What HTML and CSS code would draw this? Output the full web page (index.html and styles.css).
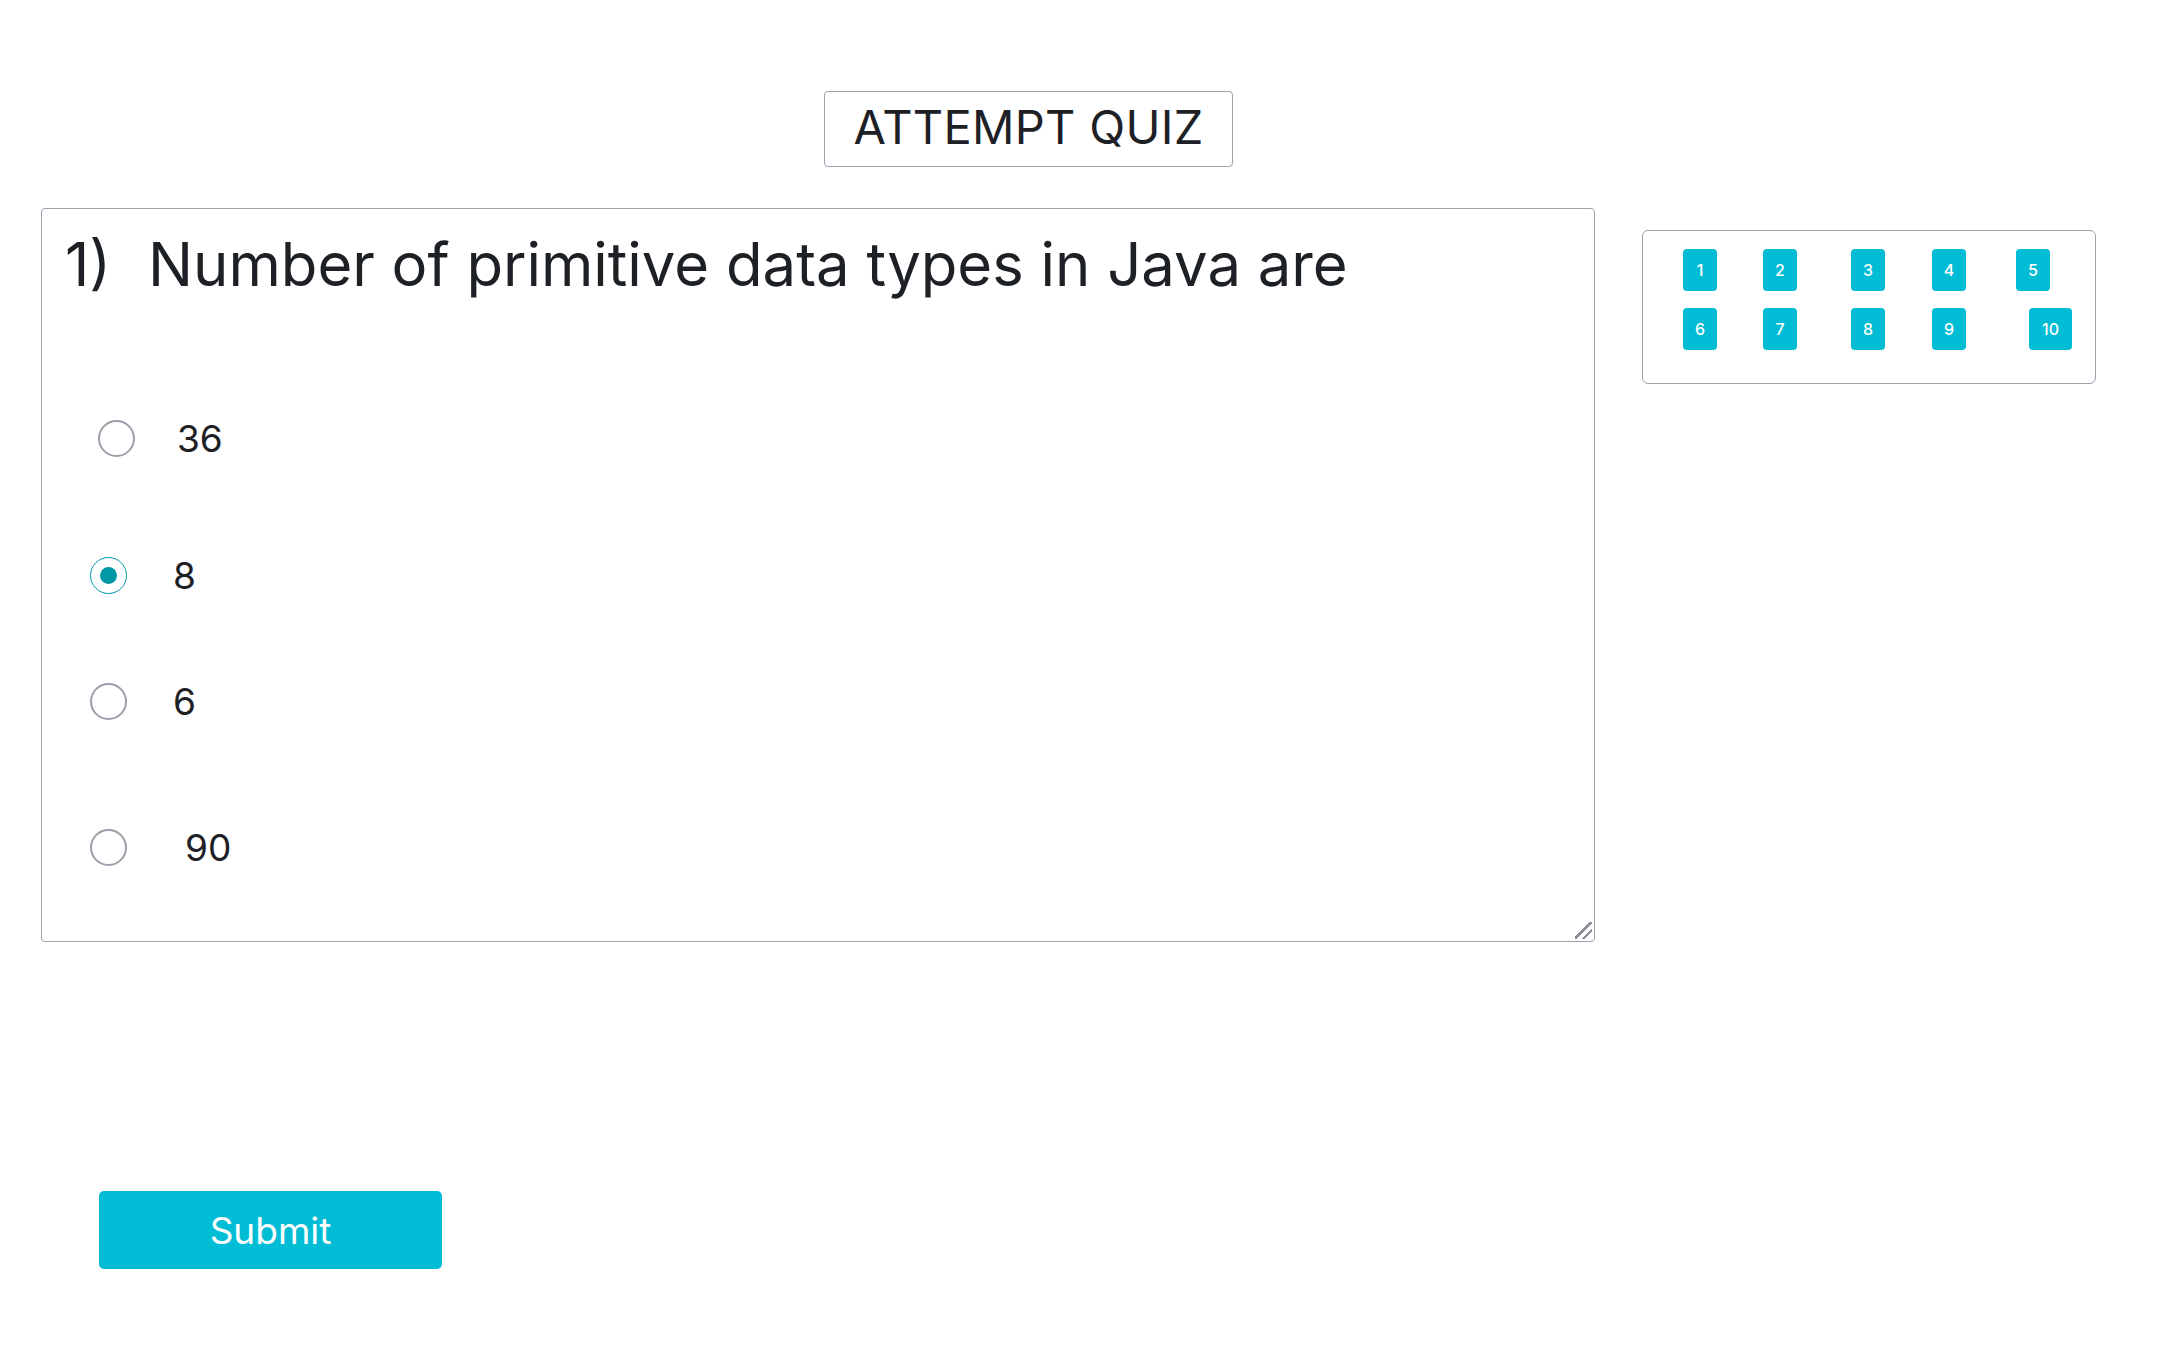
FILE: index.html
```html
<!DOCTYPE html>
<html lang="en">
<head>
<meta charset="utf-8">
<title>Attempt Quiz</title>
<link rel="stylesheet" href="styles.css">
</head>
<body>
<div class="page">
  <header class="title-wrap">
    <h1 class="title">ATTEMPT QUIZ</h1>
  </header>
  <div class="layout">
    <section class="question-box">
      <h2 class="question"><span class="qnum">1)</span><span class="qtext">Number of primitive data types in Java are</span></h2>
      <div class="options">
        <label class="option opt-1"><input type="radio" name="q1" class="radio"><span class="opt-text">36</span></label>
        <label class="option opt-2"><input type="radio" name="q1" class="radio" checked><span class="opt-text">8</span></label>
        <label class="option opt-3"><input type="radio" name="q1" class="radio"><span class="opt-text">6</span></label>
        <label class="option opt-4"><input type="radio" name="q1" class="radio"><span class="opt-text">90</span></label>
      </div>
    </section>
    <aside class="nav-box">
      <div class="nav-grid">
        <button class="qbtn">1</button>
        <button class="qbtn">2</button>
        <button class="qbtn">3</button>
        <button class="qbtn">4</button>
        <button class="qbtn">5</button>
        <button class="qbtn">6</button>
        <button class="qbtn">7</button>
        <button class="qbtn">8</button>
        <button class="qbtn">9</button>
        <button class="qbtn qbtn-wide">10</button>
      </div>
    </aside>
  </div>
  <div class="actions">
    <button class="submit">Submit</button>
  </div>
</div>
</body>
</html>
```

FILE: styles.css
```css
* { box-sizing: border-box; }

html, body {
  margin: 0;
  padding: 0;
  background: #ffffff;
}

body {
  font-family: "Inter", "Noto Sans", sans-serif;
  color: #1d2126;
}

.page {
  width: 2160px;
  height: 1350px;
  padding-top: 91px;
}

.title-wrap {
  display: flex;
  justify-content: center;
  padding-right: 103px;
}

.title {
  margin: 0;
  width: 409px;
  height: 76px;
  border: 1.5px solid #9ca3af;
  border-radius: 4px;
  display: flex;
  align-items: center;
  justify-content: center;
  padding-bottom: 5px;
  font-size: 47px;
  font-weight: 400;
  letter-spacing: 0.3px;
  color: #1d2126;
}

.layout {
  display: flex;
  align-items: flex-start;
  margin-top: 41px;
  padding-left: 41px;
  gap: 47px;
}

.question-box {
  position: relative;
  width: 1554px;
  height: 734px;
  border: 1.5px solid #9ca3af;
  border-radius: 4px;
  padding: 18px 0 0 0;
}

.question-box::after {
  content: "";
  position: absolute;
  right: 2px;
  bottom: 2px;
  width: 17px;
  height: 17px;
  background: linear-gradient(135deg,
    transparent 0 44%,
    #8a8f98 44% 53%,
    transparent 53% 70%,
    #8a8f98 70% 79%,
    transparent 79%);
}

.question {
  margin: 0;
  font-size: 59.8px;
  font-weight: 400;
  line-height: 74px;
  display: flex;
  color: #1d2126;
}

.qnum {
  padding-left: 23px;
  width: 106px;
}

.options {
  display: flex;
  flex-direction: column;
}

.option {
  display: flex;
  align-items: center;
  height: 40px;
  font-size: 37px;
  color: #1d2126;
}

.opt-1 { margin-top: 117px; padding-left: 56px; gap: 42px; }
.opt-2 { margin-top: 97px; padding-left: 48px; gap: 46px; }
.opt-3 { margin-top: 86px; padding-left: 48px; gap: 46px; }
.opt-4 { margin-top: 106px; padding-left: 48px; gap: 58px; }

.radio {
  appearance: none;
  -webkit-appearance: none;
  margin: 0;
  width: 37px;
  height: 37px;
  border: 2px solid #9aa0a9;
  border-radius: 50%;
  background: #fff;
  display: grid;
  place-items: center;
  flex: none;
}

.radio:checked {
  border-color: #0097a7;
  border-width: 1.5px;
}

.radio:checked::after {
  content: "";
  width: 17px;
  height: 17px;
  border-radius: 50%;
  background: #0097a7;
}

.nav-box {
  margin-top: 22px;
  width: 454px;
  height: 154px;
  border: 1.5px solid #9ca3af;
  border-radius: 6px;
  padding: 17.5px 0 0 40px;
}

.nav-grid {
  display: grid;
  grid-template-columns: 80px 88px 81px 84px auto;
  row-gap: 17px;
  justify-items: start;
}

.qbtn {
  height: 42px;
  width: 34px;
  border: none;
  border-radius: 4px;
  background: #00bcd4;
  color: #ffffff;
  font-family: "Inter", "Noto Sans", sans-serif;
  font-size: 16px;
  font-weight: 500;
  padding: 0;
}

.qbtn-wide {
  width: 43px;
  margin-left: 13px;
}

.actions {
  margin-top: 249px;
  padding-left: 99px;
}

.submit {
  width: 343px;
  height: 78px;
  border: none;
  border-radius: 5px;
  background: #00bcd4;
  color: #ffffff;
  font-family: "Inter", "Noto Sans", sans-serif;
  font-size: 37px;
  font-weight: 400;
}
```
